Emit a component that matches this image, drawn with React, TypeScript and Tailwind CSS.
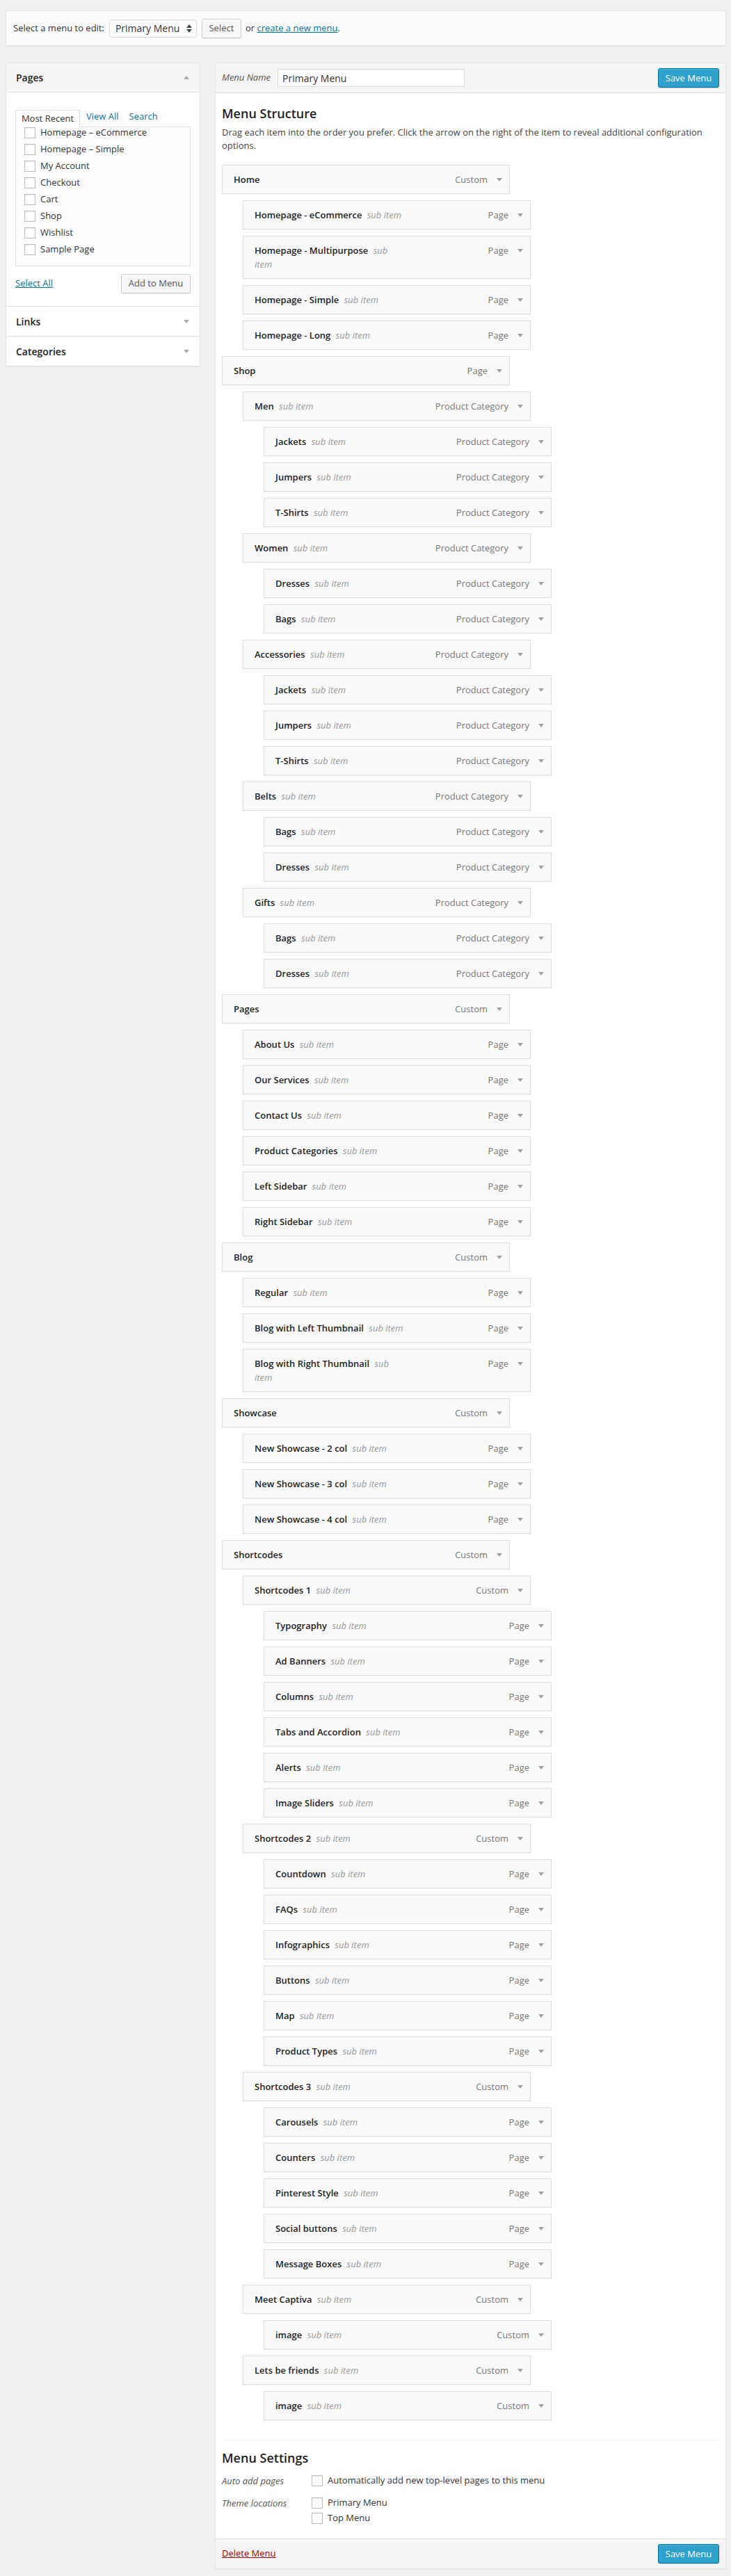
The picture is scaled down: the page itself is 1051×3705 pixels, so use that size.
import React from "react";

type Item = [number, string, string];

const PC = "Product Category";
const items: Item[] = [
  [0, "Home", "Custom"],
  [1, "Homepage - eCommerce", "Page"],
  [1, "Homepage - Multipurpose", "Page"],
  [1, "Homepage - Simple", "Page"],
  [1, "Homepage - Long", "Page"],
  [0, "Shop", "Page"],
  [1, "Men", PC],
  [2, "Jackets", PC],
  [2, "Jumpers", PC],
  [2, "T-Shirts", PC],
  [1, "Women", PC],
  [2, "Dresses", PC],
  [2, "Bags", PC],
  [1, "Accessories", PC],
  [2, "Jackets", PC],
  [2, "Jumpers", PC],
  [2, "T-Shirts", PC],
  [1, "Belts", PC],
  [2, "Bags", PC],
  [2, "Dresses", PC],
  [1, "Gifts", PC],
  [2, "Bags", PC],
  [2, "Dresses", PC],
  [0, "Pages", "Custom"],
  [1, "About Us", "Page"],
  [1, "Our Services", "Page"],
  [1, "Contact Us", "Page"],
  [1, "Product Categories", "Page"],
  [1, "Left Sidebar", "Page"],
  [1, "Right Sidebar", "Page"],
  [0, "Blog", "Custom"],
  [1, "Regular", "Page"],
  [1, "Blog with Left Thumbnail", "Page"],
  [1, "Blog with Right Thumbnail", "Page"],
  [0, "Showcase", "Custom"],
  [1, "New Showcase - 2 col", "Page"],
  [1, "New Showcase - 3 col", "Page"],
  [1, "New Showcase - 4 col", "Page"],
  [0, "Shortcodes", "Custom"],
  [1, "Shortcodes 1", "Custom"],
  [2, "Typography", "Page"],
  [2, "Ad Banners", "Page"],
  [2, "Columns", "Page"],
  [2, "Tabs and Accordion", "Page"],
  [2, "Alerts", "Page"],
  [2, "Image Sliders", "Page"],
  [1, "Shortcodes 2", "Custom"],
  [2, "Countdown", "Page"],
  [2, "FAQs", "Page"],
  [2, "Infographics", "Page"],
  [2, "Buttons", "Page"],
  [2, "Map", "Page"],
  [2, "Product Types", "Page"],
  [1, "Shortcodes 3", "Custom"],
  [2, "Carousels", "Page"],
  [2, "Counters", "Page"],
  [2, "Pinterest Style", "Page"],
  [2, "Social buttons", "Page"],
  [2, "Message Boxes", "Page"],
  [1, "Meet Captiva", "Custom"],
  [2, "image", "Custom"],
  [1, "Lets be friends", "Custom"],
  [2, "image", "Custom"],
];

const indent = ["ml-0", "ml-[30px]", "ml-[60px]"];

function Tri({ up = false, color = "#a0a0a0" }: { up?: boolean; color?: string }) {
  return (
    <svg width="8" height="5" viewBox="0 0 8 5" className="block">
      {up ? <polygon points="0,5 8,5 4,0" fill={color} /> : <polygon points="0,0 8,0 4,5" fill={color} />}
    </svg>
  );
}

function Checkbox() {
  return (
    <span className="block w-[16px] h-[16px] shrink-0 border border-[#bbb] bg-white shadow-[inset_0_1px_2px_rgba(0,0,0,0.07)]" />
  );
}

function MenuItem({ level, title, type }: { level: number; title: string; type: string }) {
  return (
    <div
      className={`${indent[level]} relative w-[414px] border border-[#dfdfdf] bg-[#fafafa] pl-[16px] py-[10px] shadow-[0_1px_1px_rgba(0,0,0,0.04)]`}
    >
      <div className="w-[216px] text-[13px] leading-[20px] font-semibold text-[#222]">
        {title}
        {level > 0 && <span className="ml-[4px] font-normal italic text-[#999]"> sub item</span>}
      </div>
      <div className="absolute right-[10px] top-[10px] flex items-center gap-[13px] h-[20px]">
        <span className="text-[13px] leading-[20px] text-[#777]">{type}</span>
        <Tri />
      </div>
    </div>
  );
}

function BlueButton() {
  return (
    <button className="h-[28px] w-[88px] rounded-[3px] border border-[#0074a2] bg-[#2ea2cc] text-[13px] leading-[26px] text-white shadow-[inset_0_1px_0_rgba(120,200,230,0.5),0_1px_0_rgba(0,0,0,0.15)]">
      Save Menu
    </button>
  );
}

export default function App() {
  return (
    <div
      className="min-h-[3705px] bg-[#f1f1f1] pl-[8px] pr-[7px] pt-[15px] pb-[13px] text-[13px] text-[#444]"
      style={{ fontFamily: '"Open Sans", "Noto Sans", sans-serif' }}
    >
      {/* top bar */}
      <div className="flex h-[51px] items-center border border-[#e5e5e5] bg-[#fbfbfb] pl-[10px] shadow-[0_1px_1px_rgba(0,0,0,0.04)]">
        <span className="text-[13px] text-[#333]">Select a menu to edit:</span>
        <div className="ml-[7px] flex h-[26px] w-[126px] items-center justify-between rounded-[3px] border border-[#ddd] bg-white pl-[8px] pr-[6px] shadow-[inset_0_1px_2px_rgba(0,0,0,0.07)]">
          <span className="text-[14px] text-[#333]">Primary Menu</span>
          <span className="flex flex-col gap-[2px]">
            <Tri up color="#444" />
            <Tri color="#444" />
          </span>
        </div>
        <button className="ml-[7px] h-[28px] w-[57px] rounded-[3px] border border-[#ccc] bg-[#f7f7f7] text-[13px] text-[#555] shadow-[inset_0_1px_0_#fff,0_1px_0_rgba(0,0,0,0.08)]">
          Select
        </button>
        <span className="ml-[6px] text-[13px] text-[#333]">
          or <span className="text-[#0074a2] underline">create a new menu</span>.
        </span>
      </div>

      <div className="mt-[24px] flex items-start gap-[21px]">
        {/* left column */}
        <div className="w-[280px] shrink-0 border border-[#e5e5e5] bg-white shadow-[0_1px_1px_rgba(0,0,0,0.04)]">
          <div className="flex h-[42px] items-center justify-between border-b border-[#dfdfdf] bg-[#f5f5f5] pl-[14px] pr-[15px]">
            <span className="text-[14px] font-semibold text-[#222]">Pages</span>
            <Tri up color="#aaa" />
          </div>
          <div className="px-[13px] pt-[24px] pb-[18px]">
            <div className="flex h-[25px] items-end">
              <div className="flex h-[25px] w-[93px] items-center justify-center border border-b-0 border-[#ddd] bg-[#fdfdfd] text-[13px] text-[#333] relative top-[1px]">
                Most Recent
              </div>
              <span className="ml-[9px] mb-[5px] text-[13px] text-[#0074a2]">View All</span>
              <span className="ml-[15px] mb-[5px] text-[13px] text-[#0074a2]">Search</span>
            </div>
            <div className="h-[201px] overflow-hidden border border-[#ddd] bg-[#fdfdfd]">
              <div className="mt-[-4px] pl-[12px]">
                {[
                  "Homepage – eCommerce",
                  "Homepage – Simple",
                  "My Account",
                  "Checkout",
                  "Cart",
                  "Shop",
                  "Wishlist",
                  "Sample Page",
                ].map((t) => (
                  <div key={t} className="flex h-[24px] items-center gap-[7px]">
                    <Checkbox />
                    <span className="text-[13px] text-[#333]">{t}</span>
                  </div>
                ))}
              </div>
            </div>
            <div className="mt-[11px] flex items-center justify-between">
              <span className="text-[13px] text-[#0074a2] underline">Select All</span>
              <button className="h-[28px] w-[100px] rounded-[3px] border border-[#ccc] bg-[#f7f7f7] text-[13px] text-[#555] shadow-[inset_0_1px_0_#fff,0_1px_0_rgba(0,0,0,0.08)]">
                Add to Menu
              </button>
            </div>
          </div>
          <div className="flex h-[43px] items-center justify-between border-t border-[#dfdfdf] pl-[14px] pr-[15px]">
            <span className="text-[14px] font-semibold text-[#222]">Links</span>
            <Tri color="#aaa" />
          </div>
          <div className="flex h-[43px] items-center justify-between border-t border-[#dfdfdf] pl-[14px] pr-[15px]">
            <span className="text-[14px] font-semibold text-[#222]">Categories</span>
            <Tri color="#aaa" />
          </div>
        </div>

        {/* right column */}
        <div className="flex-1 border border-[#e5e5e5] bg-white shadow-[0_1px_1px_rgba(0,0,0,0.04)]">
          <div className="flex h-[43px] items-center justify-between border-b border-[#dfdfdf] bg-[#f5f5f5] pl-[9px] pr-[9px]">
            <div className="flex items-center">
              <span className="text-[13px] italic text-[#555]">Menu Name</span>
              <div className="ml-[10px] flex h-[26px] w-[269px] items-center border border-[#ddd] bg-white pl-[6px] text-[14px] text-[#333] shadow-[inset_0_1px_2px_rgba(0,0,0,0.07)]">
                Primary Menu
              </div>
            </div>
            <BlueButton />
          </div>

          <div className="px-[9px]">
            <h3 className="mt-[17px] text-[18px] leading-[24px] font-semibold text-[#222]">Menu Structure</h3>
            <p className="mt-[6px] text-[13px] leading-[19px] text-[#444]">
              Drag each item into the order you prefer. Click the arrow on the right of the item to reveal additional configuration options.
            </p>
            <div className="mt-[18px] flex flex-col gap-[9px]">
              {items.map(([lvl, t, ty], i) => (
                <MenuItem key={i} level={lvl} title={t} type={ty} />
              ))}
            </div>
            <div className="mt-[28px] border-t border-[#eee]" />
            <h3 className="mt-[13px] text-[18px] leading-[24px] font-semibold text-[#222]">Menu Settings</h3>
            <div className="mt-[11px] flex">
              <div className="w-[129px] text-[13px] leading-[20px] italic text-[#555]">Auto add pages</div>
              <div className="flex items-center gap-[7px] h-[20px]">
                <Checkbox />
                <span className="text-[13px] text-[#333]">Automatically add new top-level pages to this menu</span>
              </div>
            </div>
            <div className="mt-[12px] flex pb-[19px]">
              <div className="w-[129px] text-[13px] leading-[20px] italic text-[#555]">Theme locations</div>
              <div className="flex flex-col gap-[2px]">
                <div className="flex h-[20px] items-center gap-[7px]">
                  <Checkbox />
                  <span className="text-[13px] text-[#333]">Primary Menu</span>
                </div>
                <div className="flex h-[20px] items-center gap-[7px]">
                  <Checkbox />
                  <span className="text-[13px] text-[#333]">Top Menu</span>
                </div>
              </div>
            </div>
          </div>

          <div className="flex h-[43px] items-center justify-between border-t border-[#dfdfdf] bg-[#f5f5f5] pl-[9px] pr-[9px]">
            <span className="text-[13px] text-[#a00] underline">Delete Menu</span>
            <BlueButton />
          </div>
        </div>
      </div>
    </div>
  );
}
